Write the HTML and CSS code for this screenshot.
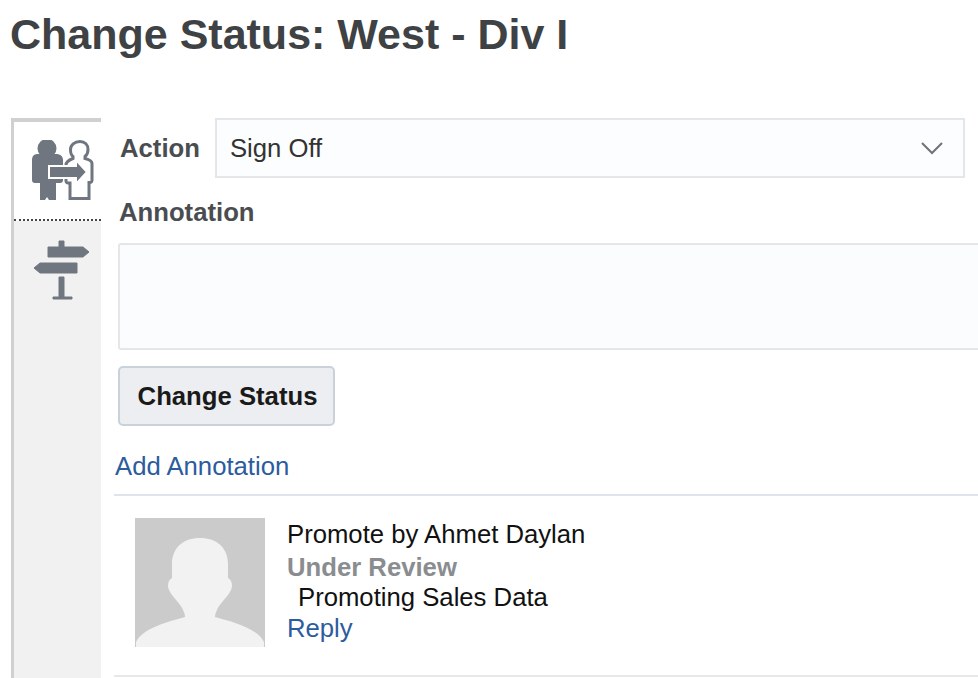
FILE: index.html
```html
<!DOCTYPE html>
<html lang="en">

<head>
    <meta charset="UTF-8">
    <title>Change Status: West - Div I</title>
    <link rel="stylesheet" href="styles.css">
</head>

<body>

    <h1 class="page-title">Change Status: West - Div I</h1>

    <div class="panel">
        <div class="tabs">
            <div class="tab active">
                <!-- two people with an arrow between them -->
                <svg class="tab-icon" width="62" height="61" viewBox="0 0 62 61">
                    <circle cx="15" cy="8.500" r="9.500" fill="#707680"/>
                    <path fill="#707680" d="M6 14h18c4 0 7 2 7 6v20c0 2-1 3-3 3h-4v17h-7l-2-3-2 3H8V43H3c-2 0-3-1-3-3V20c0-4 2-6 6-6z"/>
                    <path fill="#fff" stroke="#707680" stroke-width="3" d="M48 1.500c5 0 8 3.500 8 8 0 3-1 5.500-3 7v2c4 1 7 2 7 5v17c0 1-1 2-2 2h-1v16H38V43h-2c-1 0-2-1-2-2V25c0-3 3-5 7-6.500v-2c-2-1.500-2.500-4-2.500-7 0-4.500 4-8 9.500-8z"/>
                    <path fill="#707680" stroke="#fff" stroke-width="2" d="M17 26h27v-6l11 12-11 12v-6H17z"/>
                </svg>
            </div>
            <div class="tab">
                <!-- signpost -->
                <svg class="tab-icon" width="58" height="60" viewBox="0 0 58 60">
                    <path fill="#707680" stroke="#707680" stroke-width="1" stroke-linejoin="round" d="M26 1h5v6h19l6 5-6 5H15V7h11zM7 23h37v10H7l-6-5zM26 37h5v20h8v2H20v-2h6z"/>
                </svg>
            </div>
        </div>

        <div class="content">
            <div class="action-row">
                <label class="field-label">Action</label>
                <div class="select-box">
                    <span>Sign Off</span>
                    <svg width="22" height="14" viewBox="0 0 22 14">
                        <path fill="none" stroke="#6f7378" stroke-width="2" d="M1 2l10 10L21 2"/>
                    </svg>
                </div>
            </div>

            <label class="field-label annotation-label">Annotation</label>
            <div class="annotation-box"></div>

            <button type="button" class="status-button">Change Status</button>

            <a class="add-link">Add Annotation</a>

            <div class="comment">
                <div class="avatar">
                    <svg width="130" height="129" viewBox="0 0 130 129">
                        <path fill="#f2f2f2" d="M37 60V46C37 30 48 20 65 20S93 30 93 46V60C97 62 98 68 96 72C92 80 84 86 82 92C80 96 80 98 80 99C98 104 122 110 129 124V129H1V124C8 110 32 104 50 99C50 98 50 96 48 92C46 86 38 80 34 72C32 68 33 62 37 60Z"/>
                    </svg>
                </div>
                <div class="comment-text">
                    <div class="comment-title">Promote by Ahmet Daylan</div>
                    <div class="comment-status">Under Review</div>
                    <div class="comment-body">Promoting Sales Data</div>
                    <a class="reply-link">Reply</a>
                </div>
            </div>
        </div>
    </div>

</body>

</html>
```

FILE: styles.css
```css
body {
    margin: 0;
    height: 678px;
    overflow: hidden;
    background-color: #fff;
    font-family: "Liberation Sans", Arial, sans-serif;
    display: flex;
    flex-direction: column;
}

.page-title {
    margin: 0;
    padding: 11px 0 0 10px;
    height: 118px;
    flex-shrink: 0;
    box-sizing: border-box;
    font-size: 43px;
    line-height: 46px;
    font-weight: bold;
    color: #3f4244;
}

.panel {
    flex: 1;
    display: flex;
    min-height: 0;
    padding-left: 11px;
}

.tabs {
    width: 90px;
    flex-shrink: 0;
    box-sizing: border-box;
    border-top: 4px solid #d0d0d0;
    border-left: 3px solid #d0d0d0;
    background-color: #f1f1f1;
}

.tab {
    box-sizing: border-box;
    padding: 19px 0 0 19px;
}

.tab.active {
    height: 99px;
    padding: 18px 0 0 18px;
    background-color: #fff;
    border-bottom: 2px dotted #444;
}

.content {
    flex: 1;
    min-width: 0;
    padding-left: 13px;
}

.field-label {
    font-size: 25.7px;
    font-weight: bold;
    color: #4a4d50;
}

.action-row {
    display: flex;
    align-items: center;
    gap: 15px;
    margin-left: 6px;
    margin-right: 13px;
}

.select-box {
    flex: 1;
    height: 60px;
    box-sizing: border-box;
    padding: 0 20px 0 13px;
    display: flex;
    align-items: center;
    justify-content: space-between;
    border: 2px solid #e4e6e9;
    background-color: #fcfdfe;
    font-size: 25.7px;
    color: #333;
}

.annotation-label {
    display: block;
    margin: 20px 0 16px 5px;
    line-height: 29px;
}

.annotation-box {
    height: 107px;
    margin-left: 4px;
    margin-right: -10px;
    box-sizing: border-box;
    border: 2px solid #e4e6e9;
    border-radius: 3px;
    background-color: #fbfcfe;
}

.status-button {
    display: block;
    margin: 16px 0 0 4px;
    padding: 0 0 0 2px;
    width: 217px;
    height: 60px;
    border: 2px solid #c9d2da;
    border-radius: 5px;
    background-color: #eceef1;
    font-family: inherit;
    font-size: 25.7px;
    font-weight: bold;
    color: #1a1a1a;
}

.add-link {
    display: block;
    margin-top: 26px;
    padding: 0 0 13px 1px;
    border-bottom: 2px solid #dfe4ec;
    font-size: 25.7px;
    line-height: 29px;
    color: #2b5c9e;
}

.comment {
    display: flex;
    gap: 22px;
    padding: 22px 0 28px 21px;
    border-bottom: 2px solid #e8e8e8;
}

.avatar {
    width: 130px;
    height: 129px;
    flex-shrink: 0;
    background-color: #cbcbcb;
}

.avatar svg {
    display: block;
}

.comment-text {
    font-size: 25.7px;
    line-height: 32px;
    color: #111;
}

.comment-status {
    font-weight: bold;
    color: #8a8d90;
    line-height: 34px;
}

.comment-body {
    padding-left: 11px;
    line-height: 27px;
}

.reply-link {
    color: #2b5c9e;
    line-height: 35px;
}
```
